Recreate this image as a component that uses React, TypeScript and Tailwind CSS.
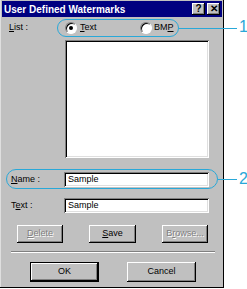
import React from "react";

const raised =
  "shadow-[inset_-1px_-1px_#000,inset_1px_1px_#fff,inset_-2px_-2px_#808080]";
const sunken =
  "shadow-[inset_1px_1px_#808080,inset_-1px_-1px_#fff,inset_2px_2px_#000,inset_-2px_-2px_#dfdfdf]";

function Key({ children }: { children: React.ReactNode }) {
  return <span className="underline underline-offset-1">{children}</span>;
}

function Radio({ checked }: { checked?: boolean }) {
  return (
    <div className="flex h-[12px] w-[12px] items-center justify-center rounded-full border border-t-[#808080] border-l-[#808080] border-r-white border-b-white bg-white shadow-[inset_1px_1px_#000]">
      {checked && <div className="h-[4px] w-[4px] rounded-full bg-black" />}
    </div>
  );
}

function Button({
  children,
  width,
  disabled,
  isDefault,
}: {
  children: React.ReactNode;
  width: string;
  disabled?: boolean;
  isDefault?: boolean;
}) {
  return (
    <div
      className={`flex items-center justify-center bg-[#c0c0c0] ${width} ${
        isDefault ? "border border-black" : ""
      } ${raised} ${
        disabled ? "text-[#808080] [text-shadow:1px_1px_#fff]" : "text-black"
      }`}
    >
      {children}
    </div>
  );
}

export default function App() {
  return (
    <div className="relative flex h-[289px] w-[247px] bg-white font-['Liberation_Sans',Arial,sans-serif] text-[9px] text-black">
      {/* dialog */}
      <div className="flex h-[288px] w-[224px] flex-col bg-[#c0c0c0] shadow-[inset_-1px_-1px_#000,inset_1px_0_#dfdfdf]">
        {/* title bar */}
        <div className="mx-[2px] mt-[1px] flex h-[16px] items-center justify-between bg-[#000080] pl-[2px] pr-[2px]">
          <span className="text-[10px] font-bold text-white">User Defined Watermarks</span>
          <div className="flex gap-[2px]">
            <div className={`flex h-[12px] w-[13px] items-center justify-center bg-[#c0c0c0] text-[10px] font-bold leading-none ${raised}`}>
              ?
            </div>
            <div className={`flex h-[12px] w-[13px] items-center justify-center bg-[#c0c0c0] text-[10px] font-bold leading-none ${raised}`}>
              ✕
            </div>
          </div>
        </div>

        <div className="flex flex-col pl-[9px]">
          {/* list row */}
          <div className="mt-[2px] flex h-[18px] items-center">
            <span className="w-[56px]">
              <Key>L</Key>ist :
            </span>
            <div className="flex w-[75px] items-center gap-[3px]">
              <Radio checked />
              <span>
                <Key>T</Key>ext
              </span>
            </div>
            <div className="flex items-center gap-[2px]">
              <Radio />
              <span>
                BM<Key>P</Key>
              </span>
            </div>
          </div>

          {/* list box */}
          <div className={`ml-[56px] mt-[3px] h-[118px] w-[144px] bg-white ${sunken}`} />

          {/* name row */}
          <div className="mt-[14px] flex h-[15px] items-center">
            <span className="ml-[2px] w-[53px]">
              <Key>N</Key>ame :
            </span>
            <div className={`flex h-[15px] w-[145px] items-center bg-white pl-[4px] ${sunken}`}>
              Sample
            </div>
          </div>

          {/* text row */}
          <div className="mt-[11px] flex h-[15px] items-center">
            <span className="ml-[2px] w-[53px]">
              T<Key>e</Key>xt :
            </span>
            <div className={`flex h-[15px] w-[145px] items-center bg-white pl-[4px] ${sunken}`}>
              Sample
            </div>
          </div>

          {/* action buttons */}
          <div className="ml-[8px] mt-[12px] flex h-[18px] gap-[26px]">
            <Button width="w-[46px]" disabled>
              <span>
                <Key>D</Key>elete
              </span>
            </Button>
            <Button width="w-[47px]">
              <span>
                <Key>S</Key>ave
              </span>
            </Button>
            <Button width="w-[46px]" disabled>
              <span>
                B<Key>r</Key>owse...
              </span>
            </Button>
          </div>

          {/* separator */}
          <div className="ml-[2px] mt-[8px] h-[2px] w-[204px] border-t border-b border-t-[#808080] border-b-white" />

          {/* ok / cancel */}
          <div className="ml-[21px] mt-[9px] flex h-[20px] gap-[28px]">
            <Button width="w-[69px]" isDefault>
              OK
            </Button>
            <Button width="w-[69px]">Cancel</Button>
          </div>
        </div>
      </div>

      {/* callout 1 */}
      <div className="absolute left-[57px] top-[19px] h-[18px] w-[122px] rounded-full border border-[#29a8d8]" />
      <div className="absolute left-[179px] top-[28px] h-px w-[58px] bg-[#29a8d8]" />
      <span className="absolute left-[239px] top-[19px] text-[16px] font-light leading-none text-[#29a8d8]">1</span>

      {/* callout 2 */}
      <div className="absolute left-[6px] top-[169px] h-[20px] w-[212px] rounded-full border border-[#29a8d8]" />
      <div className="absolute left-[218px] top-[179px] h-px w-[19px] bg-[#29a8d8]" />
      <span className="absolute left-[239px] top-[171px] text-[16px] font-light leading-none text-[#29a8d8]">2</span>
    </div>
  );
}
